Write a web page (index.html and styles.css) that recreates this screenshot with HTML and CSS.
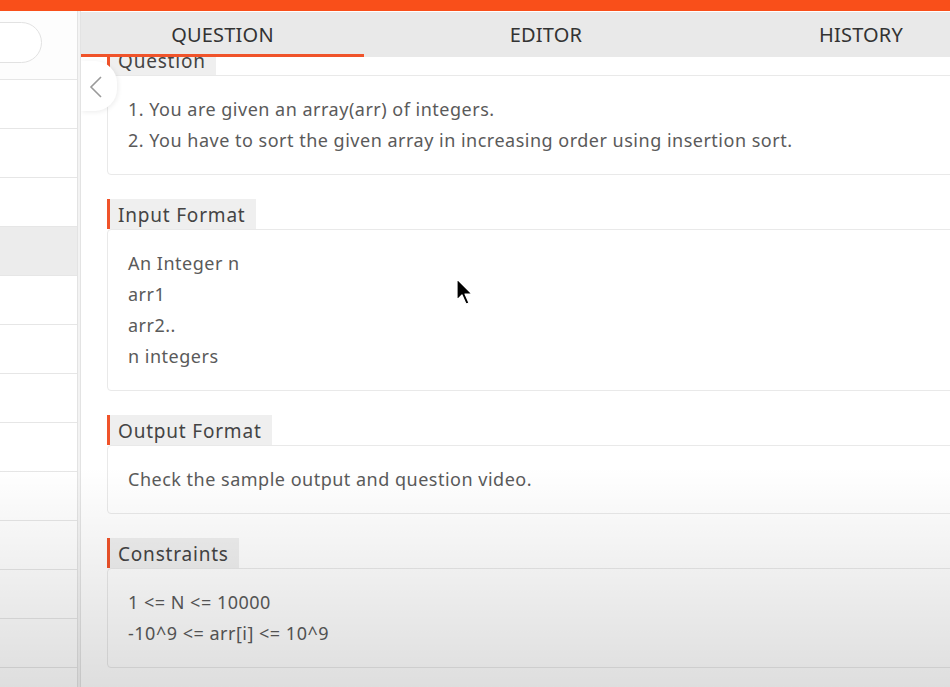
FILE: index.html
```html
<!DOCTYPE html>
<html lang="en">
<head>
<meta charset="utf-8">
<title>Question</title>
<link rel="stylesheet" href="styles.css">
</head>
<body>
<div class="topbar"></div>
<div class="app">
  <aside class="sidebar">
    <div class="search"></div>
    <ul class="list">
      <li></li><li></li><li></li><li class="selected"></li><li></li><li></li><li></li><li></li><li></li><li></li><li></li><li></li><li></li>
    </ul>
  </aside>
  <main class="panel">
    <nav class="tabs">
      <div class="tab active">QUESTION</div>
      <div class="tab">EDITOR</div>
      <div class="tab">HISTORY</div>
    </nav>
    <div class="content">
      <div class="content-inner">
        <section class="section">
          <div class="sec-head">Question</div>
          <div class="card">
            <div>1. You are given an array(arr) of integers.</div>
            <div>2. You have to sort the given array in increasing order using insertion sort.</div>
          </div>
        </section>
        <section class="section">
          <div class="sec-head">Input Format</div>
          <div class="card">
            <div>An Integer n</div>
            <div>arr1</div>
            <div>arr2..</div>
            <div>n integers</div>
          </div>
        </section>
        <section class="section">
          <div class="sec-head">Output Format</div>
          <div class="card">
            <div>Check the sample output and question video.</div>
          </div>
        </section>
        <section class="section">
          <div class="sec-head">Constraints</div>
          <div class="card">
            <div>1 &lt;= N &lt;= 10000</div>
            <div>-10^9 &lt;= arr[i] &lt;= 10^9</div>
          </div>
        </section>
      </div>
      <button class="collapse" aria-label="Collapse">
        <svg width="36" height="50" viewBox="0 0 36 50"><polyline points="20,16 10,26 20,36" fill="none" stroke="#9a9a9a" stroke-width="1.6"/></svg>
      </button>
    </div>
  </main>
</div>
<div class="vignette"></div>
<svg class="cursor" width="18" height="28" viewBox="0 0 18 28"><path d="M1 1 L1 22 L6 17 L10 26 L13 25 L9 16 L16 16 Z" fill="#000" stroke="#fff" stroke-width="1.2" stroke-linejoin="round"/></svg>
</body>
</html>
```
FILE: styles.css
```css
html, body {
  margin: 0;
  padding: 0;
}
body {
  width: 950px;
  height: 687px;
  overflow: hidden;
  position: relative;
  font-family: "Noto Sans", "Open Sans", Arial, sans-serif;
  background: #f3f3f3;
}
.topbar {
  height: 11px;
  background: #f94f1a;
}
.app {
  display: flex;
  height: 676px;
  background: #f3f3f3;
}
.sidebar {
  width: 77px;
  flex-shrink: 0;
  background: #fdfdfd;
  border-right: 1px solid #e3e3e3;
  overflow: hidden;
  padding-top: 11px;
}
.search {
  width: 80px;
  height: 39px;
  margin-left: -40px;
  border: 1px solid #e2e2e2;
  border-radius: 21px;
  background: #fff;
}
.list {
  list-style: none;
  margin: 16px 0 0 -10px;
  padding: 0;
  border-top: 1px solid #e6e6e6;
}
.list li {
  height: 48px;
  border-bottom: 1px solid #e6e6e6;
  background: #fff;
}
.list li.selected {
  background: #ececec;
}
.panel {
  width: 913px;
  flex-shrink: 0;
  margin-left: 2px;
  border-left: 1px solid #e3e3e3;
  background: #fff;
  display: flex;
  flex-direction: column;
}
.tabs {
  display: grid;
  grid-template-columns: 283px 364px 266px;
  height: 45px;
  margin-top: 1px;
  background: #e9e9e9;
  position: relative;
  z-index: 2;
}
.tab {
  display: flex;
  align-items: center;
  justify-content: center;
  font-size: 20px;
  letter-spacing: 0.2px;
  color: #333;
  border-bottom: 3px solid transparent;
  padding-top: 3px;
}
.tab.active {
  border-bottom-color: #f0532a;
}
.content {
  flex: 1;
  position: relative;
  overflow: hidden;
  background: #fff;
}
.content-inner {
  margin-top: -12px;
  padding-left: 26px;
  display: flex;
  flex-direction: column;
  gap: 24px;
}
.section {
  display: flex;
  flex-direction: column;
  align-items: flex-start;
}
.sec-head {
  height: 30px;
  display: flex;
  align-items: center;
  border-left: 3px solid #f0532a;
  background: #efefef;
  padding: 2px 10px 0 8px;
  box-sizing: border-box;
  font-size: 19px;
  letter-spacing: 0.8px;
  color: #444;
}
.card {
  align-self: stretch;
  border: 1px solid #e9e9e9;
  border-radius: 4px;
  padding: 18px 20px;
  line-height: 31px;
  font-size: 18px;
  letter-spacing: 0.5px;
  color: #5a5a5a;
  background: #fff;
}
.collapse {
  position: absolute;
  left: 0;
  top: 4px;
  width: 36px;
  height: 50px;
  padding: 0;
  border: none;
  background: #fff;
  border-radius: 0 22px 22px 0;
  box-shadow: 1px 1px 5px rgba(0,0,0,0.08);
  z-index: 3;
}
.collapse svg {
  display: block;
}
.vignette {
  position: absolute;
  left: 0;
  top: 0;
  width: 950px;
  height: 687px;
  pointer-events: none;
  background: linear-gradient(to bottom, rgba(0,0,0,0) 0%, rgba(0,0,0,0) 68%, rgba(0,0,0,0.13) 100%);
  z-index: 5;
}
.cursor {
  position: absolute;
  left: 456px;
  top: 278px;
  z-index: 6;
}
```
